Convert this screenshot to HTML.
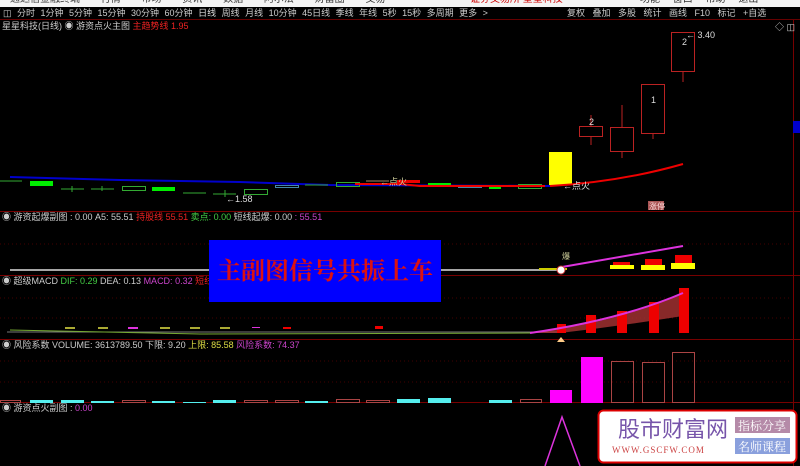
<!DOCTYPE html>
<html><head><meta charset="utf-8"><style>
*{margin:0;padding:0}
body{width:800px;height:466px;background:#000;overflow:hidden;position:relative;font-family:"Liberation Sans","Noto Sans CJK SC",sans-serif;font-size:9px}
.t{position:absolute;white-space:nowrap;line-height:11px}
</style></head><body>
<div style="position:absolute;left:0;top:0;width:800px;height:7px;background:#f4f4f4;overflow:hidden">
<div class="t" style="top:-6px;left:10px;color:#333;font-size:10px;word-spacing:18px">通达信金融终端 行情 市场 资讯 数据 阿尔法 财富圈 交易</div>
<div class="t" style="top:-6px;left:470px;color:#c00;font-size:10px">证券交易所 星星科技</div>
<div class="t" style="top:-6px;left:640px;color:#333;font-size:10px;word-spacing:10px">功能 窗口 帮助 退出</div>
</div>
<div style="position:absolute;left:0;top:7px;width:800px;height:12px;background:#000;border-bottom:1px solid #600"></div>
<div class="t" style="top:8px;left:3px;color:#ccc;font-size:9px;word-spacing:3px">◫ 分时 1分钟 5分钟 15分钟 30分钟 60分钟 <span style="color:#ddd">日线</span> 周线 月线 10分钟 45日线 季线 年线 5秒 15秒 多周期 更多 ></div>
<div class="t" style="top:8px;left:567px;color:#ccc;word-spacing:5px">复权 叠加 多股 统计 画线 F10 标记 +自选</div>
<div class="t" style="top:21px;left:2px;color:#ccc">星星科技(日线) ◉ 游资点火主图 <span style="color:#e22">主趋势线 1.95</span></div>
<div class="t" style="top:212px;left:2px;color:#ccc">◉ 游资起爆副图 : 0.00 A5: 55.51 <span style="color:#e22">持股线 55.51</span> <span style="color:#4c4">卖点: 0.00</span> 短线起爆: 0.00 <span style="color:#c4c">: 55.51</span></div>
<div class="t" style="top:276px;left:2px;color:#ccc">◉ 超级MACD <span style="color:#4c4">DIF: 0.29</span> DEA: 0.13 <span style="color:#c4c">MACD: 0.32</span> <span style="color:#e22">短线只做红柱柱</span></div>
<div class="t" style="top:340px;left:2px;color:#ccc">◉ 风险系数 VOLUME: 3613789.50 下限: 9.20 <span style="color:#dd4">上限: 85.58</span> <span style="color:#c4c">风险系数: 74.37</span></div>
<div class="t" style="top:403px;left:2px;color:#ccc">◉ 游资点火副图 : <span style="color:#c4c">0.00</span></div>
<svg style="position:absolute;left:0;top:0" width="800" height="466">
<g stroke="#700" stroke-width="1">
<line x1="0" y1="211.5" x2="800" y2="211.5"/><line x1="0" y1="275.5" x2="800" y2="275.5"/>
<line x1="0" y1="339.5" x2="800" y2="339.5"/><line x1="0" y1="402.5" x2="800" y2="402.5"/>
<line x1="793.5" y1="20" x2="793.5" y2="466"/>
</g>
<g stroke="#400" stroke-dasharray="1,3">
<line x1="0" y1="244" x2="792" y2="244"/><line x1="0" y1="298" x2="792" y2="298"/><line x1="0" y1="318" x2="792" y2="318"/><line x1="0" y1="361" x2="792" y2="361"/><line x1="0" y1="382" x2="792" y2="382"/>
</g>
<text x="775" y="30" fill="#ccc" font-size="9">◇ ◫</text>
<rect x="793" y="121" width="7" height="12" fill="#00c"/>
<!-- main candles -->
<polyline points="10,177 120,180 240,182 330,185 550,186" stroke="#00c" stroke-width="2" fill="none"/>
<line x1="0" y1="181" x2="22" y2="181" stroke="#3a3"/>
<rect x="30" y="181" width="23" height="5" fill="#0e0"/>
<g stroke="#3a3" fill="none">
<line x1="61" y1="189" x2="84" y2="189"/><line x1="72" y1="186" x2="72" y2="192"/>
<line x1="91" y1="189" x2="114" y2="189"/><line x1="102" y1="186" x2="102" y2="191"/>
<rect x="122.5" y="186.5" width="23" height="4"/>
<line x1="183" y1="193" x2="206" y2="193"/><line x1="213" y1="194" x2="236" y2="194"/><line x1="225" y1="190" x2="225" y2="197"/>
<rect x="244.5" y="189.5" width="23" height="5"/>
<line x1="305" y1="185" x2="328" y2="185"/>
<rect x="336.5" y="182.5" width="23" height="4"/>
<rect x="518.5" y="184.5" width="23" height="4"/>
</g>
<rect x="152" y="187" width="23" height="4" fill="#0e0"/>
<rect x="275.5" y="185.5" width="23" height="2" stroke="#48a" fill="none"/>
<rect x="458.5" y="185.5" width="23" height="2" stroke="#48a" fill="none"/>
<line x1="366" y1="181" x2="389" y2="181" stroke="#a86"/>
<rect x="397" y="180" width="23" height="3" fill="#e00"/>
<rect x="428" y="183" width="23" height="4" fill="#0e0"/>
<rect x="489" y="185" width="12" height="4" fill="#0e0"/>
<rect x="549" y="152" width="23" height="33" fill="#ff0"/>
<path d="M550,186 Q620,182 683,164" stroke="#e00" stroke-width="2" fill="none"/>
<path d="M355,184 L400,184 L420,186 L545,186" stroke="#e00" stroke-width="2" fill="none"/>
<g stroke="#b22" fill="none">
<rect x="579.5" y="126.5" width="23" height="10"/><line x1="591" y1="115" x2="591" y2="126"/><line x1="591" y1="137" x2="591" y2="145"/>
<rect x="610.5" y="127.5" width="23" height="24"/><line x1="622" y1="105" x2="622" y2="127"/><line x1="622" y1="152" x2="622" y2="158"/>
<rect x="641.5" y="84.5" width="23" height="49"/><line x1="653" y1="134" x2="653" y2="139"/>
<rect x="671.5" y="32.5" width="23" height="39"/><line x1="683" y1="72" x2="683" y2="82"/>
</g>
<g fill="#ddd" font-size="9"><text x="589" y="125">2</text><text x="651" y="103">1</text><text x="682" y="45">2</text><text x="686" y="38">← 3.40</text>
<text x="226" y="202">←1.58</text><text x="380" y="185" fill="#cc9">←点火</text><text x="563" y="189">←点火</text></g>
<rect x="648" y="201" width="16" height="9" fill="#a55"/><text x="649" y="209" fill="#fdd" font-size="8">涨停</text>
<!-- sub1 -->
<line x1="10" y1="270" x2="560" y2="270" stroke="#ddd" stroke-width="1.5"/>
<rect x="539" y="268" width="28" height="2" fill="#cc0"/>
<rect x="610" y="265" width="24" height="4" fill="#ff0"/><rect x="613" y="262" width="17" height="3" fill="#e00"/>
<rect x="641" y="265" width="24" height="5" fill="#ff0"/><rect x="645" y="259" width="17" height="6" fill="#e00"/>
<rect x="671" y="263" width="24" height="6" fill="#ff0"/><rect x="675" y="255" width="17" height="8" fill="#e00"/>
<line x1="562" y1="267" x2="683" y2="246" stroke="#d3d" stroke-width="2"/>
<circle cx="561" cy="270" r="4" fill="#fff" stroke="#c33"/><text x="562" y="259" fill="#cc9" font-size="8">爆</text>
<rect x="209" y="240" width="232" height="62" fill="#00f"/>
<text x="325" y="279" fill="#d11" font-size="24" text-anchor="middle" font-family="Noto Serif CJK SC,serif" font-weight="bold">主副图信号共振上车</text>
<!-- macd -->
<line x1="7" y1="332" x2="560" y2="332" stroke="#777"/>
<path d="M530,333 Q620,322 683,293 L683,316 Q620,326 560,333 Z" fill="#a33" opacity="0.8"/>
<g fill="#e00"><rect x="557" y="324" width="9" height="9"/><rect x="586" y="315" width="10" height="18"/><rect x="617" y="311" width="10" height="22"/><rect x="649" y="302" width="10" height="31"/><rect x="679" y="288" width="10" height="45"/><rect x="375" y="326" width="8" height="3"/><rect x="283" y="327" width="8" height="2"/></g>
<g fill="#aa3"><rect x="65" y="327" width="10" height="2"/><rect x="98" y="327" width="10" height="2"/><rect x="160" y="327" width="10" height="2"/><rect x="190" y="327" width="10" height="2"/><rect x="220" y="327" width="10" height="2"/></g>
<rect x="128" y="327" width="10" height="2" fill="#d3d"/><rect x="252" y="327" width="8" height="1" fill="#d3d"/>
<path d="M530,333 Q620,320 683,293" stroke="#d3d" stroke-width="2" fill="none"/>
<path d="M10,330 L200,334 L530,333" stroke="#7a3" fill="none"/>
<polygon points="561,337 557,342 565,342" fill="#fc8"/>
<!-- volume -->
<g fill="#5ee"><rect x="30" y="400" width="23" height="3"/><rect x="61" y="400" width="23" height="3"/><rect x="91" y="401" width="23" height="2"/><rect x="152" y="401" width="23" height="2"/><rect x="183" y="402" width="23" height="1"/><rect x="213" y="400" width="23" height="3"/><rect x="305" y="401" width="23" height="2"/><rect x="397" y="399" width="23" height="4"/><rect x="428" y="398" width="23" height="5"/><rect x="489" y="400" width="23" height="3"/></g>
<g stroke="#a44" fill="none"><rect x="0.5" y="400.5" width="20" height="2"/><rect x="122.5" y="400.5" width="23" height="2"/><rect x="244.5" y="400.5" width="23" height="2"/><rect x="275.5" y="400.5" width="23" height="2"/><rect x="336.5" y="399.5" width="23" height="3"/><rect x="366.5" y="400.5" width="23" height="2"/><rect x="520.5" y="399.5" width="21" height="3"/>
<rect x="611.5" y="361.5" width="22" height="41"/><rect x="642.5" y="362.5" width="22" height="40"/><rect x="672.5" y="352.5" width="22" height="50"/></g>
<rect x="550" y="390" width="22" height="13" fill="#f0f"/><rect x="581" y="357" width="22" height="46" fill="#f0f"/>
<!-- last -->
<polyline points="545,466 562,417 580,466" stroke="#d3d" stroke-width="1.5" fill="none"/>
<rect x="598.5" y="410.5" width="198" height="52" rx="5" fill="#fff" stroke="#d00" stroke-width="2"/>
<text x="618" y="437" font-size="22" fill="#7755aa" font-family="Noto Sans CJK SC,sans-serif">股市财富网</text>
<text x="612" y="453" font-size="9" fill="#c44" font-family="Liberation Serif,serif" letter-spacing="1">WWW.GSCFW.COM</text>
<rect x="735" y="417" width="55" height="16" fill="#b58aa8"/><text x="762" y="430" font-size="12" fill="#fff" text-anchor="middle" font-family="Noto Serif CJK SC,serif">指标分享</text>
<rect x="735" y="438" width="55" height="16" fill="#8aa0dd"/><text x="762" y="451" font-size="12" fill="#fff" text-anchor="middle" font-family="Noto Serif CJK SC,serif">名师课程</text>
</svg>
</body></html>
